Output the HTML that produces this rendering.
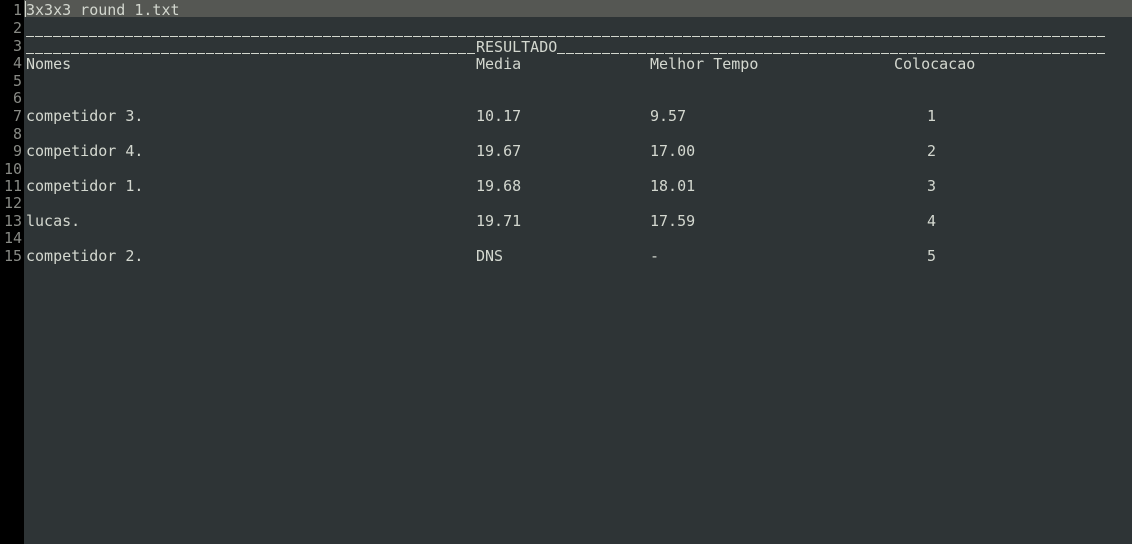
<!DOCTYPE html>
<html><head><style>
body{margin:0;width:1132px;height:544px;background:#2e3436;overflow:hidden;font-family:"DejaVu Sans Mono","Liberation Mono",monospace;font-size:15px;color:#d3d7cf;position:relative}
#g{position:absolute;left:0;top:0;width:24px;height:544px;background:#000}
#hl{position:absolute;left:24px;top:0;width:1108px;height:17px;background:#555753}
#cur{position:absolute;left:25px;top:1px;width:1px;height:16px;background:#d3d7cf}
.n{position:absolute;right:1110px;color:#888a85;line-height:17px;white-space:pre}
.t{position:absolute;line-height:17px;white-space:pre}
.d{position:absolute;height:1px;background:repeating-linear-gradient(90deg,#d3d7cf 0 8px,transparent 8px 9px)}
</style></head><body>
<div id="g"></div><div id="hl"></div><div id="cur"></div>
<div class="n" style="top:2px">1</div>
<div class="n" style="top:20.4px">2</div>
<div class="n" style="top:37.8px">3</div>
<div class="n" style="top:55.2px">4</div>
<div class="n" style="top:72.6px">5</div>
<div class="n" style="top:90px">6</div>
<div class="n" style="top:108.4px">7</div>
<div class="n" style="top:125.8px">8</div>
<div class="n" style="top:143.2px">9</div>
<div class="n" style="top:160.6px">10</div>
<div class="n" style="top:178px">11</div>
<div class="n" style="top:195.4px">12</div>
<div class="n" style="top:212.8px">13</div>
<div class="n" style="top:230.2px">14</div>
<div class="n" style="top:247.6px">15</div>

<div class="t" style="left:26px;top:2px">3x3x3 round 1.txt</div>
<div class="d" style="left:26px;top:36px;width:1080px"></div>
<div class="d" style="left:26px;top:53px;width:450px"></div>
<div class="t" style="left:476px;top:38.8px">RESULTADO</div>
<div class="d" style="left:557px;top:53px;width:549px"></div>
<div class="t" style="left:26px;top:56.2px">Nomes</div><div class="t" style="left:476px;top:56.2px">Media</div><div class="t" style="left:650px;top:56.2px">Melhor Tempo</div><div class="t" style="left:894px;top:56.2px">Colocacao</div>

<div class="t" style="left:26px;top:108.4px">competidor 3.</div><div class="t" style="left:476px;top:108.4px">10.17</div><div class="t" style="left:650px;top:108.4px">9.57</div><div class="t" style="left:927px;top:108.4px">1</div>
<div class="t" style="left:26px;top:143.2px">competidor 4.</div><div class="t" style="left:476px;top:143.2px">19.67</div><div class="t" style="left:650px;top:143.2px">17.00</div><div class="t" style="left:927px;top:143.2px">2</div>
<div class="t" style="left:26px;top:178px">competidor 1.</div><div class="t" style="left:476px;top:178px">19.68</div><div class="t" style="left:650px;top:178px">18.01</div><div class="t" style="left:927px;top:178px">3</div>
<div class="t" style="left:26px;top:212.8px">lucas.</div><div class="t" style="left:476px;top:212.8px">19.71</div><div class="t" style="left:650px;top:212.8px">17.59</div><div class="t" style="left:927px;top:212.8px">4</div>
<div class="t" style="left:26px;top:247.6px">competidor 2.</div><div class="t" style="left:476px;top:247.6px">DNS</div><div class="t" style="left:650px;top:247.6px">-</div><div class="t" style="left:927px;top:247.6px">5</div>
</body></html>
